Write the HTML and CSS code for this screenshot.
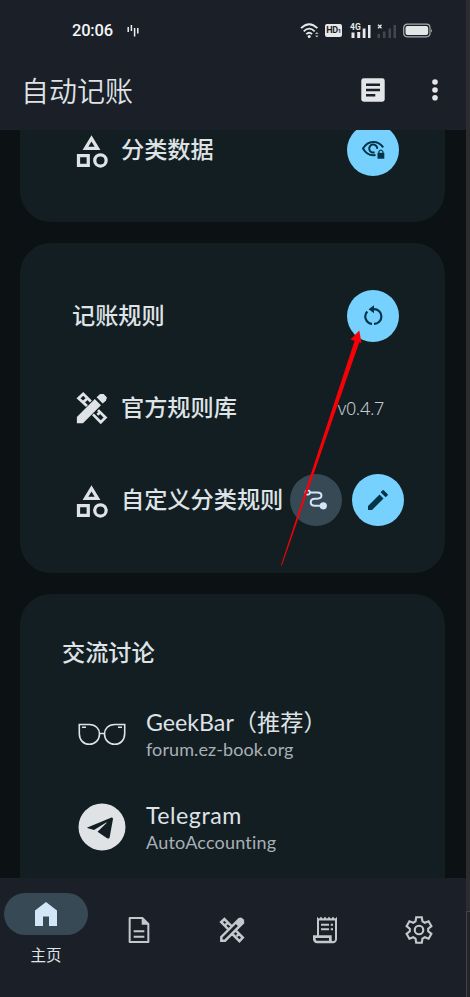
FILE: index.html
```html
<!DOCTYPE html>
<html lang="zh-CN">
<head>
<meta charset="utf-8">
<title>自动记账</title>
<link rel="stylesheet" href="styles.css">
</head>
<body>
<svg class="defs" width="0" height="0">
  <symbol id="category" viewBox="0 0 24 24"><path d="M12 2l-5.5 9h11L12 2zm0 3.84L13.93 9h-3.87L12 5.84zM17.5 13a4.5 4.5 0 1 0 0 9 4.5 4.5 0 0 0 0-9zm0 7a2.5 2.5 0 1 1 0-5 2.5 2.5 0 0 1 0 5zM3 21.5h8v-8H3v8zm2-6h4v4H5v-4z"/></symbol>
</svg>
<div class="phone">
  <header class="top">
    <div class="status">
      <span class="time">20:06</span>
      <svg class="wave" width="12" height="14" viewBox="0 0 12 14"><path d="M1.2 3v5M4.400 1v6M7.600 4v8.500M10.800 4v5.500" stroke="#eef0f3" stroke-width="1.500"/></svg>
      <div class="signals">
        <svg width="20" height="16" viewBox="0 0 20 16"><g fill="none" stroke="#e6e8ea" stroke-width="1.800"><path d="M1 5.200Q9.200-2.700 17.400 5.200M3.700 8.300Q9.200 3 14.700 8.300M6.300 11.200Q9.200 8.300 12.100 11.200"/></g><circle cx="9.200" cy="13.500" r="1.500" fill="#e6e8ea"/><path d="M15 11l1.800-2 1.800 2zM15 12.500h3.600l-1.800 2z" fill="#aeb2b7"/></svg>
        <span class="hd">HD<small>1</small></span>
        <span class="cell">
          <svg width="21" height="16" viewBox="0 0 21 16"><path d="M1.500 9.500h3v5.500h-3zM7.200 9h3v6h-3zM12.700 5.500h2.800V15h-2.800zM18 2h2.500v13H18z" fill="#e6e8ea"/></svg><b class="net">4G</b>
        </span>
        <svg class="sim" width="20" height="16" viewBox="0 0 20 16"><path d="M1 1.700l3.500 3.500M4.500 1.700L1 5.200" stroke="#e6e8ea" stroke-width="1.300"/><path d="M.5 11h2.500v4H.5zM6 8.500h2.500V15H6zM11.500 5.500H14V15h-2.500zM16.500 2H19v13h-2.500z" fill="#42484f"/></svg>
        <svg class="battery" width="30" height="15" viewBox="0 0 30 15"><rect x=".7" y="1.200" width="26.300" height="12.600" rx="3.500" fill="none" stroke="#a7adae" stroke-width="1.200"/><rect x="2.500" y="3" width="22.700" height="9" rx="2" fill="#e2e7e6"/><path d="M28 5.500q1.700 2 0 4z" fill="#a7adae"/></svg>
      </div>
    </div>
    <div class="appbar">
      <h1>自动记账</h1>
      <svg class="note" width="24" height="24" viewBox="0 0 24 24"><rect x=".3" y=".3" width="23.400" height="23.400" rx="2.400" fill="#e3e5e9"/><path d="M5 6.800h14M5 12h14M5 17.200h9.300" stroke="#1b1f27" stroke-width="2.600"/></svg>
      <svg class="more" width="6" height="22" viewBox="0 0 6 22"><g fill="#e3e5e9"><circle cx="3" cy="3" r="2.800"/><circle cx="3" cy="11" r="2.800"/><circle cx="3" cy="18.800" r="2.800"/></g></svg>
    </div>
  </header>

  <main>
    <section class="card data">
      <div class="row">
        <svg class="icon"><use href="#category"/></svg>
        <span class="label">分类数据</span>
        <button class="round"><svg width="25" height="20" viewBox="0 0 25 20"><path d="M22.200 7.300C17 .2 7.200-.2 2 8.500c3 5.300 7.500 7.400 12.500 6.600" fill="none" stroke="#003549" stroke-width="2"/><path d="M13.600 12.300A4 4 0 1 1 16.200 8.900" fill="none" stroke="#003549" stroke-width="2"/><path d="M16.500 12.800h6.800v5.900h-6.800z" fill="#003549"/><path d="M17.900 13v-1.500q2-2.600 4 0V13" fill="none" stroke="#003549" stroke-width="1.200"/></svg></button>
      </div>
    </section>

    <section class="card rules">
      <div class="row heading"><span class="label">记账规则</span>
        <button class="round"><svg width="20" height="22" viewBox="0 0 20 22"><path d="M9 4.100h2a7.400 7.400 0 0 1 0 14.800M9 18.900A7.400 7.400 0 0 1 4.300 6.500" fill="none" stroke="#003549" stroke-width="2.200"/><path d="M5.500 4.200L11 .3v7.900z" fill="#003549"/></svg></button>
      </div>
      <div class="row library">
        <svg class="icon" viewBox="0 0 24 24"><path d="M3 17.250V21h3.750L17.800 9.940l-3.750-3.750zM20.900 7.200L21.500 5.300 19.500 3h-2.200l-2.200 2.100 3.750 3.750z"/><path d="M9.200 10.500L4 5.700 6.900 3l4.700 4.700M12.900 15.600l4.800 4.900 2.900-2.900-4.600-4.600M7.200 7.800l2-1.800M15.600 15.800l1.900-1.700" fill="none" stroke="currentColor" stroke-width="1.700"/></svg>
        <span class="label">官方规则库</span><span class="version">v0.4.7</span>
      </div>
      <div class="row custom">
        <svg class="icon"><use href="#category"/></svg>
        <span class="label">自定义分类规则</span>
        <button class="round muted"><svg width="24" height="22" viewBox="0 0 24 22"><path d="M5 3.500h8.300c5.500 0 5.500 6.200 0 6.200H11c-5.700 0-5.700 7 0 7h7" fill="none" stroke="#d1e7f7" stroke-width="2"/><circle cx="3.700" cy="3.500" r="2.200" fill="#374955" stroke="#d1e7f7" stroke-width="1.700"/><circle cx="19.300" cy="16.800" r="3.600" fill="#d1e7f7"/></svg></button>
        <button class="round edit"><svg width="20" height="20" viewBox="0 0 20 20"><path d="M0 16v4h4L15.500 8.500l-4-4zM19.700 4.300 15.700.3q-.6-.5-1.200 0l-1.900 2 5 5 2-1.900q.5-.5.1-1.100z" fill="#003549"/></svg></button>
      </div>
    </section>

    <section class="card talk">
      <h2>交流讨论</h2>
      <div class="link">
        <svg width="48" height="48" viewBox="0 0 48 48"><g fill="none" stroke="#dfe3e6" stroke-width="1.600"><path d="M1.300 14.500h10.200c6 0 10 4.300 10 9.500 0 6-4.500 10.300-10 10.300C5.500 34.300 1.300 30 1.300 23.500zM46.700 14.500H36.500c-6 0-10 4.300-10 9.500 0 6 4.500 10.300 10 10.300 6 0 10.200-4.300 10.200-10.800zM21.300 23.500h5.400M4 17.300h4M40 17.300h4"/></g></svg>
        <div><p class="name">GeekBar（推荐）</p><p class="sub">forum.ez-book.org</p></div>
      </div>
      <div class="link">
        <svg width="48" height="48" viewBox="0 0 48 48"><circle cx="24" cy="24" r="23.500" fill="#dfe3e6"/><path d="M9.300 24.500 33 14.700c1.300-.5 2.200.1 1.900 1.900L31.700 34c-.3 1.700-1.400 2-2.600 1.200L19.500 28.800l9-8.700c.5-.6 0-.8-.7-.4L16 27.100l-6-1.900q-1.500-.4-.7-.7z" fill="#131e23"/></svg>
        <div><p class="name wide">Telegram</p><p class="sub wide">AutoAccounting</p></div>
      </div>
    </section>
  </main>

  <nav>
    <a class="active"><span class="pill"><svg width="22" height="24" viewBox="0 0 22 24"><path d="M11 0 0 8.500V24h8v-9.500h6V24h8V8.500z" fill="#d1e7f7"/></svg></span><span class="tab">主页</span></a>
    <a><svg width="32" height="32" viewBox="0 0 24 24"><path d="M5 3h9.500L19 7.500V21H5z" fill="none" stroke="#c3c7ce" stroke-width="1.500" stroke-linejoin="round"/><path d="M14 2.500 19.500 8H14z" fill="#c3c7ce"/><path d="M8 13h8M8 17h8" stroke="#c3c7ce" stroke-width="1.500"/></svg></a>
    <a><svg width="32" height="32" viewBox="0 0 24 24"><g fill="none" stroke="#c3c7ce" stroke-width="1.900"><path d="M4 20v-2.800L17.300 3.900l2.800 2.800L6.800 20zM9.300 11.500 3.900 6.100l2.400-2.300 5.300 5.300M12.500 15.200l5.100 5.100 2.500-2.600-5-5M7 8.300l1.900-1.800M15.500 16.600l1.900-1.800"/></g><path d="M14 6.700 17.500 3q1.200-.8 2.400.3l.9.900q.9 1.300 0 2.300L17.500 10z" fill="#c3c7ce"/></svg></a>
    <a><svg width="32" height="32" viewBox="0 0 24 24"><path d="M19.500 3.500 18 2l-1.500 1.500L15 2l-1.500 1.500L12 2l-1.500 1.500L9 2 7.500 3.500 6 2v14H3v3c0 1.660 1.340 3 3 3h12c1.660 0 3-1.340 3-3V2zM15 20H6c-.55 0-1-.45-1-1v-1h10zm4.500-1c0 .8-.7 1.500-1.500 1.500s-1-.7-1-1.500v-3H7.500V4.800h12z" fill="#c3c7ce"/><path d="M9 8h6M9 11.500h6M16.300 8H18M16.300 11.500H18" stroke="#c3c7ce" stroke-width="1.500"/></svg></a>
    <a><svg width="32" height="32" viewBox="0 0 24 24"><path d="M9.900 2.700h4.200l.5 3.100 1.700 1 2.900-1.100 2.100 3.700-2.400 1.900v1.900l2.400 1.900-2.100 3.700-2.900-1.100-1.700 1-.5 3.100H9.900l-.5-3.100-1.700-1-2.900 1.100-2.100-3.700 2.400-1.900v-1.900L2.700 9.400l2.100-3.700 2.900 1.100 1.700-1z" transform="translate(0 -.25)" fill="none" stroke="#c3c7ce" stroke-width="1.600"/><circle cx="12" cy="12" r="3.200" fill="none" stroke="#c3c7ce" stroke-width="1.600"/></svg></a>
  </nav>
  <svg class="pointer" width="82" height="236" viewBox="0 0 82 236"><path d="M0 235.300 .9 235.600 78.300 12.300 80.500 13 78.300.5 69.500 9.500 73.600 10.800z" fill="#f90009"/></svg>
</div>
<div class="edge"><span></span></div>
</body>
</html>
```

FILE: styles.css
```css
* { box-sizing: border-box; }
body {
  margin: 0;
  height: 997px;
  overflow: hidden;
  display: flex;
  background: #0c1114;
  color: #dfe3e6;
  font-family: "Noto Sans CJK SC", sans-serif;
}
h1, h2, p { margin: 0; }
svg { display: block; flex: none; }
.defs { position: absolute; }
.phone {
  position: relative;
  width: 466px;
  height: 997px;
  display: flex;
  flex-direction: column;
}
.edge { width: 4px; background: #2c2b2e; padding-top: 911px; }
.edge span { display: block; height: 86px; background: #242427; border-top: 1px solid #454448; border-left: 1px solid #454448; }
.top { height: 130px; flex: none; background: #1b1f27; }
.status {
  height: 61px;
  padding: 0 33px 0 72px;
  display: flex;
  align-items: center;
}
.time { font: 500 16.500px/20px Roboto, sans-serif; color: #f3f4f6; width: 42px; letter-spacing: -.2px; }
.wave { margin-left: 13px; }
.signals { margin-left: auto; display: flex; align-items: center; }
.hd {
  width: 17px;
  height: 13px;
  margin: 0 8px 0 5px;
  border-radius: 2px;
  background: #e6e8ea;
  color: #1b1f27;
  font: 700 9px/13px Roboto, sans-serif;
  text-align: center;
  letter-spacing: -.4px;
}
.hd small { font-size: 6px; }
.cell { position: relative; }
.net {
  position: absolute;
  left: 0;
  top: 0;
  font: 700 8.500px/8px Roboto, sans-serif;
  color: #e6e8ea;
  background: #1b1f27;
}
.sim { margin: 0 6px; }
.appbar {
  height: 60px;
  padding: 0 28px 0 21px;
  display: flex;
  align-items: center;
}
h1 { flex: 1; font-size: 28px; line-height: 40px; font-weight: 350; margin-top: -3px; }
.note { margin-right: 47px; margin-top: -3px; }
.more { margin-top: -3px; }
main {
  flex: 1;
  min-height: 0;
  overflow: hidden;
  padding: 0 21px 0 20px;
  display: flex;
  flex-direction: column;
  gap: 21px;
}
.card { background: #131e23; border-radius: 31px; flex: none; }
.data { height: 92px; border-radius: 0 0 31px 31px; padding: 0 46px 0 52px; }
.rules { height: 330px; padding: 47px 46px 0 52px; }
.talk { height: 330px; padding: 40px 40px 0 42px; }
.row { display: flex; align-items: center; height: 52px; }
.data .row { margin-top: -6px; }
.icon { width: 39px; height: 39px; margin-right: 10px; fill: #dfe3e6; color: #dfe3e6; }
.data .icon { margin-top: 3px; }
.custom .icon { margin-top: 2px; }
.label { flex: 1; font-size: 23.200px; line-height: 34px; font-weight: 500; white-space: nowrap; }
.data .label, .heading .label { margin-top: -5px; }
.round {
  width: 52px;
  height: 52px;
  flex: none;
  border: 0;
  padding: 0;
  border-radius: 50%;
  background: #77d1ff;
  display: flex;
  align-items: center;
  justify-content: center;
}
.muted { background: #374955; }
.library { margin-top: 40px; }
.library .label { margin-top: -5px; }
.version { font: 300 18px/26px "Noto Sans", sans-serif; color: #c3c9cd; margin-right: 15px; letter-spacing: -.3px; }
.custom { margin-top: 40px; margin-right: -5px; }
.custom .label { margin-top: -4px; }
.edit { margin-left: 10px; }
h2 { font-size: 23.200px; line-height: 34px; font-weight: 500; }
.link { display: flex; align-items: center; gap: 20px; height: 58px; margin: 37px 0 35px 16px; }
.link + .link { margin-top: 0; }
.name { font: 400 23.200px/30px Lato, "Noto Sans CJK SC", sans-serif; white-space: nowrap; }
.sub { font: 400 18px/25px Lato, sans-serif; color: #a9b0b5; letter-spacing: .1px; }
.name.wide { letter-spacing: .5px; }
.sub.wide { letter-spacing: .2px; font-variant-ligatures: none; }
nav {
  width: 466px;
  height: 119px;
  flex: none;
  overflow: hidden;
  background: #1b1f27;
  display: grid;
  grid-template-columns: 92px repeat(4, 93.300px);
}
nav a { display: flex; flex-direction: column; align-items: center; padding-top: 36px; }
nav .active { padding-top: 15px; }
.pill { width: 84px; height: 42px; border-radius: 21px; background: #374955; display: flex; align-items: center; justify-content: center; }
.tab { font-size: 15.500px; line-height: 22px; margin-top: 8px; }
.pointer { position: absolute; left: 281px; top: 330px; }
```
